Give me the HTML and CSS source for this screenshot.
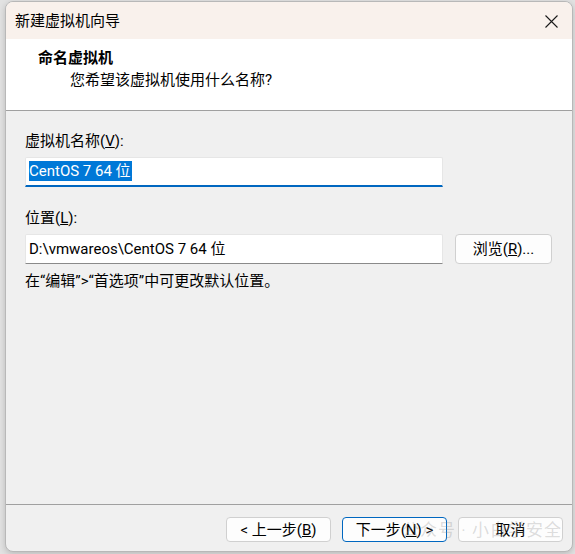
FILE: index.html
```html
<!DOCTYPE html>
<html lang="zh-CN">
<head>
    <meta charset="UTF-8">
    <title>新建虚拟机向导</title>
    <link rel="stylesheet" href="styles.css">
</head>
<body>
    <div class="window">
        <div class="titlebar">
            <span class="title">新建虚拟机向导</span>
            <svg class="close" width="13" height="13" viewBox="0 0 13 13">
                <path d="M0.5 0.5 L12.5 12.5 M12.5 0.5 L0.5 12.5" stroke="#1a1a1a" stroke-width="1.1" fill="none"/>
            </svg>
        </div>

        <div class="header">
            <h1>命名虚拟机</h1>
            <p>您希望该虚拟机使用什么名称?</p>
        </div>

        <div class="content">
            <label class="label" for="vmName">虚拟机名称(<u>V</u>):</label>
            <div class="input focused" id="vmName"><span class="selected">CentOS 7 64 位</span></div>

            <label class="label second" for="vmPath">位置(<u>L</u>):</label>
            <div class="row">
                <div class="input" id="vmPath">D:\vmwareos\CentOS 7 64 位</div>
                <button class="btn browse">浏览(<u>R</u>)...</button>
            </div>
            <p class="hint">在“编辑”&gt;“首选项”中可更改默认位置。</p>
        </div>

        <div class="footer">
            <button class="btn">&lt; 上一步(<u>B</u>)</button>
            <button class="btn default">下一步(<u>N</u>) &gt;</button>
            <button class="btn">取消</button>
            <span class="watermark">公众号 · 小白学安全</span>
        </div>
    </div>
</body>
</html>
```

FILE: styles.css
```css
html, body {
    margin: 0;
    padding: 0;
}

body {
    width: 575px;
    height: 554px;
    background: #e2e2e2;
    font-family: Roboto, "Noto Sans CJK SC", sans-serif;
    font-size: 15px;
    color: #000;
    overflow: hidden;
}

.window {
    box-sizing: border-box;
    margin: 1px 0 0 5px;
    width: 568px;
    height: 551px;
    border: 1px solid #b8b8b8;
    border-radius: 8px;
    overflow: hidden;
    display: flex;
    flex-direction: column;
    background: #f0f0f0;
    box-shadow: 0 2px 6px rgba(0, 0, 0, 0.18);
    position: relative;
}

.titlebar {
    height: 37px;
    flex: none;
    background: #f9f1ec;
    display: flex;
    align-items: center;
    justify-content: space-between;
    padding: 0 14px 0 9px;
}

.title {
    font-size: 15px;
    line-height: 20px;
}

.close {
    margin-top: 1px;
}

.header {
    height: 72px;
    flex: none;
    background: #fff;
    border-bottom: 1px solid #a0a0a0;
    padding: 9px 0 0 32px;
    box-sizing: border-box;
}

.header h1 {
    margin: 0;
    font-size: 15px;
    font-weight: bold;
    line-height: 20px;
}

.header p {
    margin: 2px 0 0 32px;
    line-height: 20px;
}

.content {
    flex: 1;
    padding: 20px 0 0 19px;
    border-bottom: 1px solid #a0a0a0;
}

.label {
    display: block;
    line-height: 20px;
}

.label.second {
    margin-top: 21px;
}

.input {
    box-sizing: border-box;
    width: 418px;
    height: 30px;
    margin-top: 6px;
    background: #fff;
    border: 1px solid #e6e6e6;
    border-bottom: 1px solid #8a8a8a;
    border-radius: 2px 2px 0 0;
    padding: 0 3px;
    line-height: 28px;
    white-space: nowrap;
}

.input.focused {
    border-bottom: 2px solid #0067c0;
    line-height: 27px;
}

.selected {
    background: #0078d7;
    color: #fff;
    padding: 1px 1px 1px 0;
}

.row {
    display: flex;
    align-items: flex-start;
    gap: 12px;
}

.hint {
    margin: 7px 0 0;
    line-height: 20px;
}

.btn {
    box-sizing: border-box;
    font-family: inherit;
    font-size: 15px;
    color: #000;
    background: #fdfdfd;
    border: 1px solid #d0d0d0;
    border-radius: 4px;
    padding: 0;
    line-height: 20px;
}

.browse {
    width: 97px;
    height: 30px;
    margin-top: 6px;
}

.footer {
    height: 46px;
    flex: none;
    display: flex;
    justify-content: flex-end;
    gap: 11px;
    padding: 12px 9px 0 0;
    box-sizing: border-box;
    position: relative;
}

.footer .btn {
    width: 105px;
    height: 25px;
}

.btn.default {
    border-color: #0067c0;
}

.watermark {
    position: absolute;
    right: 10px;
    top: 13px;
    font-size: 17px;
    line-height: 24px;
    letter-spacing: 1px;
    color: rgba(140, 140, 140, 0.3);
    pointer-events: none;
}
```
